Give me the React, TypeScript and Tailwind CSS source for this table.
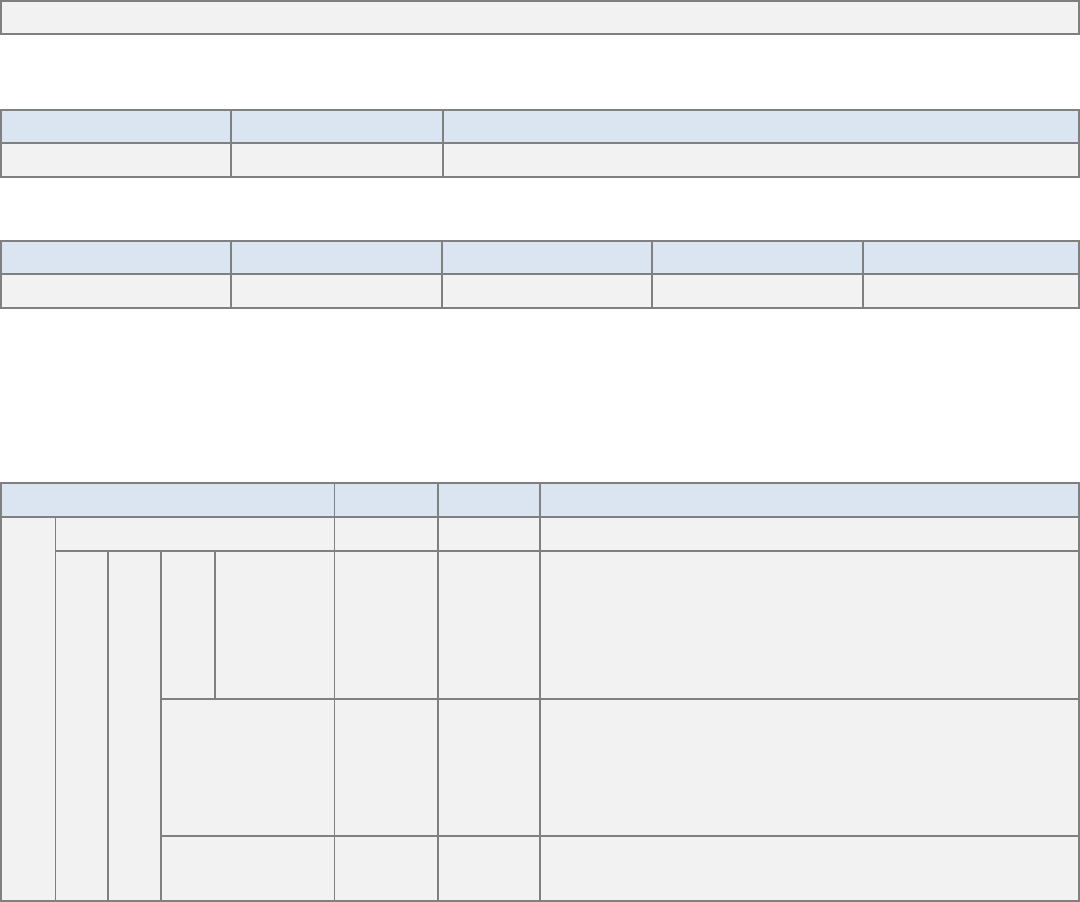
import React from 'react';

const cell = 'border-r-2 border-b-2 border-[#808080] p-0';
const thin = 'border-r border-b-2 border-[#808080] p-0';
const head = `${cell} bg-[#dbe5f1]`;
const body = `${cell} bg-[#f2f2f2]`;
const headThin = `${thin} bg-[#dbe5f1]`;
const bodyThin = `${thin} bg-[#f2f2f2]`;
const table =
  'w-[1080px] table-fixed border-separate border-spacing-0 border-l-2 border-t-2 border-[#808080]';

function Cols({ widths }: { widths: number[] }) {
  return (
    <colgroup>
      {widths.map((w, i) => (
        <col key={i} style={{ width: w }} />
      ))}
    </colgroup>
  );
}

export default function App() {
  return (
    <div className="w-[1080px] bg-white font-['Liberation_Sans',sans-serif]">
      <div className="h-[35px] border-2 border-[#808080] bg-[#f2f2f2]" />

      {/* three column table */}
      <table className={`mt-[74px] ${table}`}>
        <Cols widths={[230, 212, 636]} />
        <tbody>
          <tr className="h-[33px]">
            <td className={head} />
            <td className={head} />
            <td className={head} />
          </tr>
          <tr className="h-[34px]">
            <td className={body} />
            <td className={body} />
            <td className={body} />
          </tr>
        </tbody>
      </table>

      <table className={`mt-[62px] ${table}`}>
        <Cols widths={[230, 211, 210, 211, 216]} />
        <tbody>
          <tr className="h-[33px]">
            {[0, 1, 2, 3, 4].map((i) => (
              <td key={i} className={head} />
            ))}
          </tr>
          <tr className="h-[34px]">
            {[0, 1, 2, 3, 4].map((i) => (
              <td key={i} className={body} />
            ))}
          </tr>
        </tbody>
      </table>

      {/* nested layout table */}
      <table className={`mt-[173px] ${table}`}>
        <Cols widths={[54, 53, 53, 54, 119, 104, 102, 539]} />
        <tbody>
          <tr className="h-[34px]">
            <td colSpan={5} className={headThin} />
            <td className={head} />
            <td className={head} />
            <td className={head} />
          </tr>
          <tr className="h-[34px]">
            <td rowSpan={4} className={bodyThin} />
            <td colSpan={4} className={bodyThin} />
            <td className={body} />
            <td className={body} />
            <td className={body} />
          </tr>
          <tr className="h-[148px]">
            <td rowSpan={3} className={body} />
            <td rowSpan={3} className={body} />
            <td className={body} />
            <td className={bodyThin} />
            <td className={body} />
            <td className={body} />
            <td className={body} />
          </tr>
          <tr className="h-[137px]">
            <td colSpan={2} className={bodyThin} />
            <td className={body} />
            <td className={body} />
            <td className={body} />
          </tr>
          <tr className="h-[65px]">
            <td colSpan={2} className={bodyThin} />
            <td className={body} />
            <td className={body} />
            <td className={body} />
          </tr>
        </tbody>
      </table>
    </div>
  );
}
